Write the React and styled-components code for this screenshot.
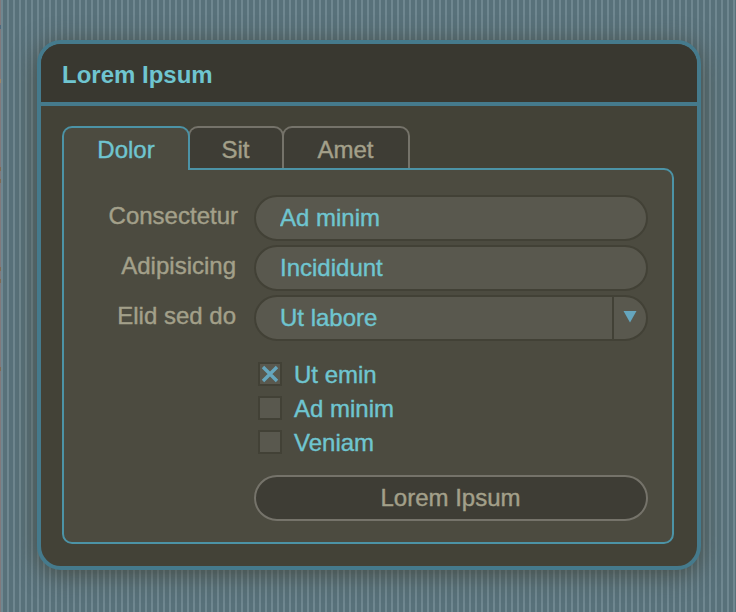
import React, { useState } from "react";
import styled, { createGlobalStyle } from 'styled-components'

const GlobalStyle = createGlobalStyle`
 * { box-sizing: border-box; }
 body {
  margin: 0;
  overflow: hidden;
 }
`;

const Desktop = styled.div`
 height: 612px;
 width: 736px;
 padding: 40px 35px 42px 37px;
 overflow: hidden;
 font-family: "Liberation Sans", Arial, sans-serif;
 font-size: 24px;
 line-height: 27px;
 -webkit-text-stroke: .4px currentColor;
 background-color: #58717a;
 background-image:
  linear-gradient(#51697c, #51697c),
  linear-gradient(#a08464, #a08464),
  linear-gradient(#806a54, #806a54),
  linear-gradient(#806a54, #806a54),
  linear-gradient(#806a54, #806a54),
  linear-gradient(#806a54, #806a54),
  linear-gradient(#806a54, #806a54),
  linear-gradient(#80797d, #80797d),
  repeating-linear-gradient(to right, #6f8790 0 2px, #58717a 2px 6px);
 background-size: 1px 4px, 1px 4px, 1px 4px, 1px 4px, 1px 4px, 1px 4px, 1px 4px, 1px 612px, 6px 6px;
 background-position: 0 25px, 0 79px, 0 167px, 0 179px, 0 267px, 0 279px, 0 367px, 0 0, 1px 0;
 background-repeat: no-repeat, no-repeat, no-repeat, no-repeat, no-repeat, no-repeat, no-repeat, no-repeat, repeat;
`;

const Window = styled.div`
 height: 530px;
 border: 4px solid #457a8c;
 border-radius: 24px;
 background: #434237;
 box-shadow: 0 4px 24px rgba(66,65,54,.75);
 overflow: hidden;
`;

const TitleBar = styled.div`
 height: 62px;
 padding: 17px 21px 0;
 border-bottom: 4px solid #457a8c;
 background: #393830;
 color: #6fc5d0;
 font-weight: bold;
 -webkit-text-stroke: 0;
`;

const Content = styled.div`
 padding: 20px 23px 0 21px;
`;

const TabList = styled.div`
 display: flex;
 height: 44px;
 margin-bottom: -2px;
`;

const Tab = styled.button`
 width: ${({ $width }) => $width}px;
 height: ${({ $active }) => $active ? 44 : 42}px;
 margin: 0 -2px 0 0;
 padding: ${({ $active }) => $active ? '1px 0 0' : '3px 1px 0 0'};
 position: relative;
 z-index: ${({ $active }) => $active ? 1 : 0};
 border: 2px solid ${({ $active }) => $active ? '#4c93a6' : '#75736a'};
 border-bottom: none;
 border-radius: 10px 10px 0 0;
 background: ${({ $active }) => $active ? '#4c4b40' : '#3e3d35'};
 color: ${({ $active }) => $active ? '#6fc5d0' : '#a3a08a'};
 font: inherit;
 cursor: pointer;
`;

const Panel = styled.div`
 height: 376px;
 padding: 25px 24px 0 34px;
 border: 2px solid #4c93a6;
 border-radius: 0 10px 10px 10px;
 background: #4c4b40;
`;

const Row = styled.div`
 display: grid;
 grid-template-columns: ${({ $label }) => $label}px 394px;
 justify-content: end;
 column-gap: ${({ $gap }) => $gap}px;
 height: 46px;
 margin-bottom: 4px;
`;

const Label = styled.label`
 padding-top: 7px;
 color: #a3a08a;
 text-align: right;
`;

const Input = styled.input`
 width: 394px;
 height: 46px;
 padding: 0 24px 1px;
 border: 2px solid #424136;
 border-radius: 23px;
 outline: none;
 background: #59584e;
 color: #6fc5d0;
 font: inherit;
`;

const Select = styled.div`
 display: flex;
 height: 46px;
 border: 2px solid #424136;
 border-radius: 23px;
 background: #59584e;
 color: #6fc5d0;
 cursor: pointer;
`;

const SelectValue = styled.span`
 flex: 1;
 padding: 7px 0 0 24px;
`;

const SelectArrow = styled.span`
 display: flex;
 justify-content: center;
 width: 34px;
 padding-top: 14px;
 border-left: 2px solid #424136;
`;

const CheckList = styled.div`
 display: grid;
 row-gap: 6px;
 margin: 20px 0 18px 160px;
`;

const CheckItem = styled.div`
 display: flex;
 gap: 12px;
 height: 28px;
 align-items: flex-start;
 color: #6fc5d0;
 cursor: pointer;
`;

const CheckBox = styled.span`
 display: flex;
 align-items: center;
 justify-content: center;
 width: 24px;
 height: 24px;
 margin-top: 1px;
 border: 2px solid #424136;
 background: #59584e;
`;

const Button = styled.button`
 display: block;
 width: 394px;
 height: 46px;
 margin-left: auto;
 padding: 0 1px 1px 0;
 border: 2px solid #75736a;
 border-radius: 23px;
 background: #3e3d35;
 color: #a3a08a;
 font: inherit;
 cursor: pointer;
`;

const tabs = [
  { name: 'Dolor', width: 128 },
  { name: 'Sit', width: 96 },
  { name: 'Amet', width: 128 }
];

const CheckOption = ({ text, checked, onToggle }) => (
  <CheckItem role='checkbox' aria-checked={checked} onClick={onToggle}>
    <CheckBox>
      {checked && (
        <svg width='18' height='18' viewBox='0 0 18 18'>
          <path d='M2 2L16 16M16 2L2 16' stroke='#65a5bd' strokeWidth='3.4' fill='none' />
        </svg>
      )}
    </CheckBox>
    <span>{text}</span>
  </CheckItem>
);

export default function App() {
  const [ active, setActive ] = useState('Dolor');
  const [ checks, setChecks ] = useState({ 'Ut emin': true, 'Ad minim': false, 'Veniam': false });

  const toggle = (name) => setChecks({ ...checks, [name]: !checks[name] });

  return (
    <Desktop>
      <GlobalStyle />
      <Window>
        <TitleBar>Lorem Ipsum</TitleBar>
        <Content>
          <TabList>
            {tabs.map(({ name, width }) => (
              <Tab key={name} $width={width} $active={active === name} onClick={() => setActive(name)}>{name}</Tab>
            ))}
          </TabList>
          <Panel>
            <Row $label={150} $gap={16}>
              <Label htmlFor='first'>Consectetur</Label>
              <Input id='first' defaultValue='Ad minim' />
            </Row>
            <Row $label={150} $gap={18}>
              <Label htmlFor='second'>Adipisicing</Label>
              <Input id='second' defaultValue='Incididunt' />
            </Row>
            <Row $label={150} $gap={18}>
              <Label>Elid sed do</Label>
              <Select>
                <SelectValue>Ut labore</SelectValue>
                <SelectArrow>
                  <svg width='14' height='12' viewBox='0 0 14 12'>
                    <path d='M.5 0H13.5L7 11.5Z' fill='#65a5bd' />
                  </svg>
                </SelectArrow>
              </Select>
            </Row>
            <CheckList>
              {Object.keys(checks).map((name) => (
                <CheckOption key={name} text={name} checked={checks[name]} onToggle={() => toggle(name)} />
              ))}
            </CheckList>
            <Button>Lorem Ipsum</Button>
          </Panel>
        </Content>
      </Window>
    </Desktop>
  );
}
